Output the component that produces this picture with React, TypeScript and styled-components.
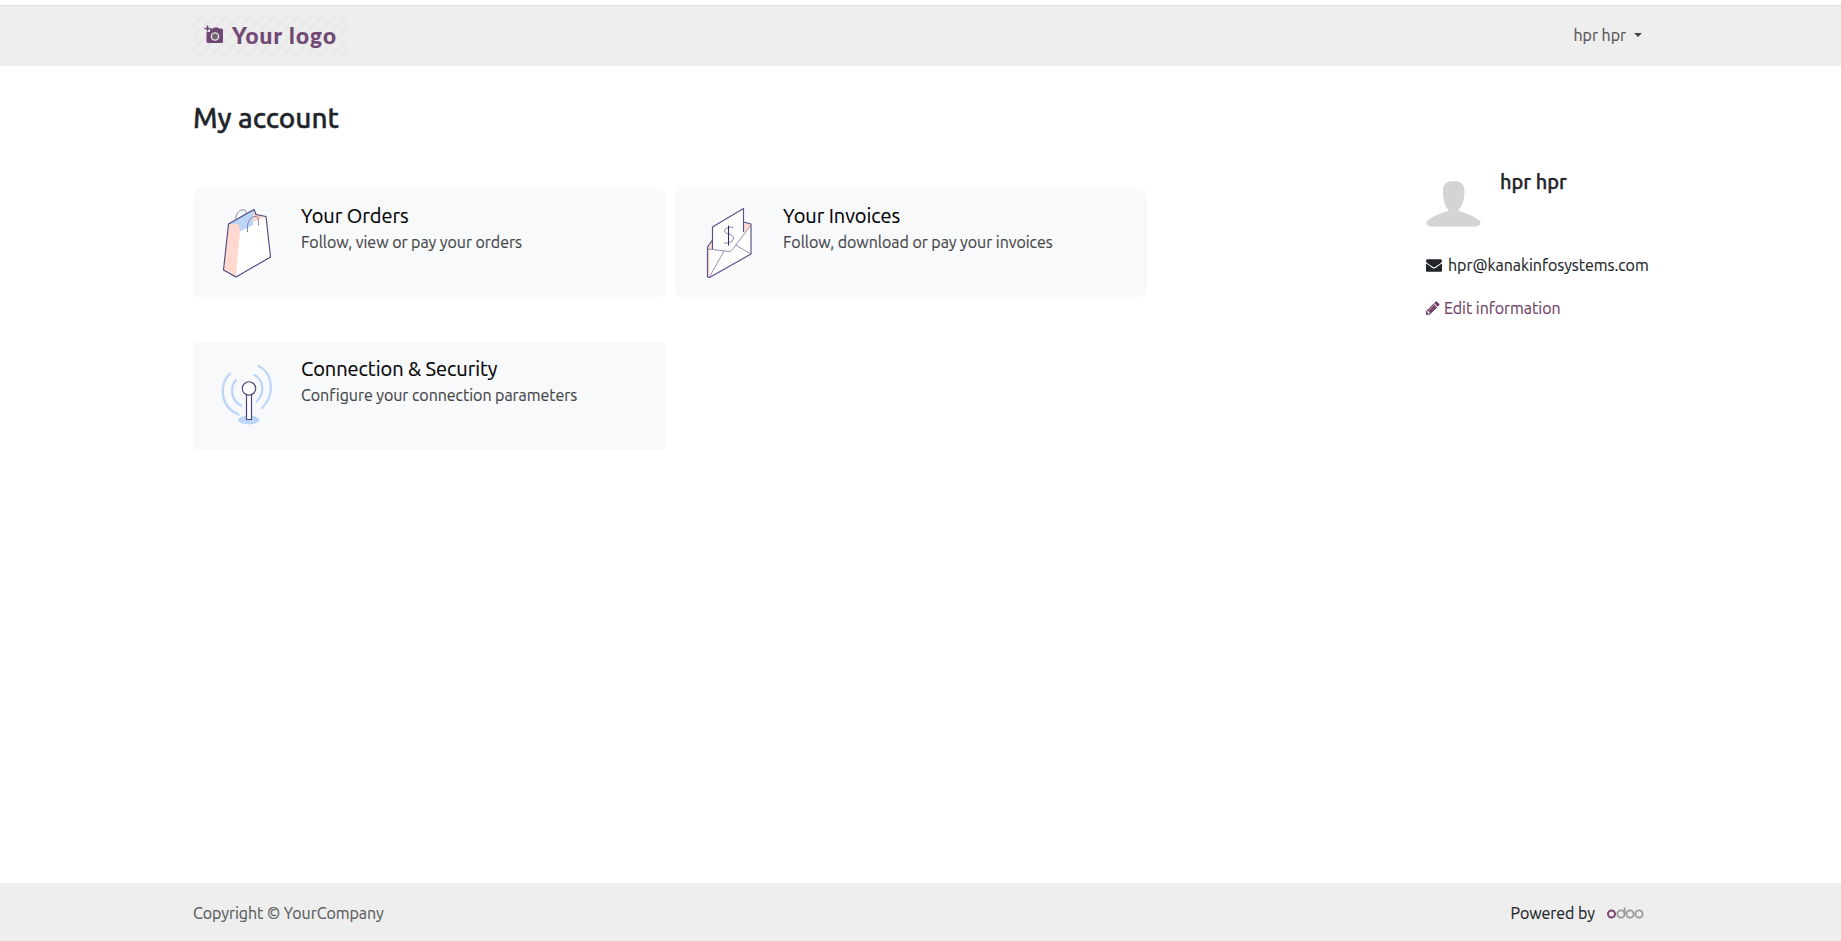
import React from 'react';
import styled, { createGlobalStyle } from 'styled-components';

const GlobalStyle = createGlobalStyle`
  * { box-sizing: border-box; }
  body {
    margin: 0;
    background: #fff;
    color: #212529;
    font-family: Ubuntu, 'Noto Sans', sans-serif;
    font-size: 16px;
    line-height: 24px;
    letter-spacing: -0.045px;
    -webkit-text-stroke: 0.15px;
  }
  a { color: inherit; text-decoration: none; }
  h1, h3, h4, p { margin: 0; }
  svg { display: block; flex: none; }
`;

const Page = styled.div`
  display: flex;
  flex-direction: column;
  height: 941px;
`;

const Header = styled.header`
  display: flex;
  justify-content: space-between;
  height: 60px;
  margin-top: 6px;
  padding: 9px 198px 0 193px;
  background: #eeeeee;
  box-shadow: 0 -1px 0 #dfdfdf;
`;

const Brand = styled.a`
  display: flex;
  align-items: flex-start;
  width: 156px;
  height: 42px;
  padding: 10px 0 0 11px;
  background: repeating-linear-gradient(135deg, #eeeeee 0 6.200px, #e9e9e9 6.200px 8.500px);
`;

const BrandName = styled.span`
  margin-left: 8px;
  color: #714873;
  font: 900 22.5px/22px Lato, sans-serif;
  letter-spacing: 1.15px;
  white-space: nowrap;
`;

const UserMenu = styled.a`
  display: flex;
  align-items: center;
  height: 24px;
  margin-top: 8px;
  color: #555;
`;

const Caret = styled.span`
  margin: 0 1px 0 8px;
  border: 4px solid transparent;
  border-top-color: #444;
  border-bottom: 0;
`;

const Main = styled.main`
  flex: 1;
  padding: 32px 192px 0 193px;
`;

const Title = styled.h1`
  font-size: 28px;
  line-height: 40px;
  font-weight: 500;
  -webkit-text-stroke: 0.4px;
`;

const Columns = styled.div`
  display: flex;
  justify-content: space-between;
`;

const Cards = styled.div`
  display: grid;
  grid-template-columns: 473px 472px;
  grid-auto-rows: 108px;
  gap: 45px 9px;
  padding-top: 51px;
`;

const Card = styled.a`
  display: flex;
  border-radius: 6px;
  background: #f8f9fb;
`;

const CardIcon = styled.svg<{ $shift?: number }>`
  width: 80px;
  height: 90px;
  margin: 6px ${p => 11 + (p.$shift ?? 0)}px 0 ${p => 17 - (p.$shift ?? 0)}px;
`;

const CardBody = styled.div`
  padding-top: 14px;
  white-space: nowrap;
`;

const CardTitle = styled.h3`
  color: #000;
  font-size: 20px;
  line-height: 26px;
  font-weight: 400;
`;

const CardText = styled.p`
  margin-top: 1px;
  color: #444648;
`;

const Profile = styled.aside`
  width: 223px;
  padding-top: 31px;
`;

const Person = styled.div`
  display: flex;
  height: 59px;
`;

const PersonName = styled.h4`
  margin-left: 18px;
  font-size: 20px;
  line-height: 26px;
  font-weight: 500;
  -webkit-text-stroke: 0.35px;
`;

const Line = styled.div<{ $top: number; $gap: number }>`
  display: flex;
  align-items: center;
  gap: ${p => p.$gap}px;
  margin-top: ${p => p.$top}px;
`;

const EditLink = styled(Line).attrs({ as: 'a' })`
  color: #714367;
`;

const Footer = styled.footer`
  display: flex;
  justify-content: space-between;
  height: 58px;
  padding: 18px 197px 0 193px;
  background: #eeeeee;
`;

const Copyright = styled.span`
  color: #5a5c5e;
`;

const Powered = styled.span`
  display: flex;
  gap: 12px;
`;

const Camera = () => (
  <svg width="20" height="20" viewBox="0 0 20 20">
    <path d="M6 3.500h3l1-1h4l1 1h2.500q1.500 0 1.500 1.500v11.500q0 1.500-1.500 1.500h-14Q2.500 18 2.500 16.500V7H6z" fill="#714873" />
    <circle cx="11" cy="11.500" r="4.300" fill="#e6e0e7" />
    <circle cx="11" cy="11.500" r="2.900" fill="#6b6670" />
    <path d="M3.500 .5v6M.5 3.500h6" stroke="#714873" strokeWidth="1.500" />
  </svg>
);

const Bag = () => (
  <CardIcon viewBox="0 0 80 90" fill="none">
    <path d="M18.500 29 44 14.500 46 19.500 56 21.500 60.500 62 26 82 13.500 75z" fill="#fff" />
    <path d="M18.500 29h10.500l1 7-4 46-12.500-7z" fill="#ffd9cf" />
    <path d="M18.500 29 44 14.500 43 30 30 36.500 28.500 29z" fill="#bcd6fa" />
    <path d="M43.500 17 46 19.500 55 21.500 43.500 27z" fill="#ffd2c8" />
    <path d="M18.500 29 44 14.500 46 19.500 56 21.500 60.500 62 26 82 13.500 75z" stroke="#49447f" strokeWidth="1.100" strokeLinejoin="round" />
    <path d="M25.500 24c1-7 5-10 9-9 1.500.5 1.500 2 1.500 3M37.500 37v-5c0-7 5-11.500 9-10.500 2 1 2 3 2 9" stroke="#7b789f" strokeWidth=".9" />
  </CardIcon>
);

const Envelope = () => (
  <CardIcon $shift={2} viewBox="0 0 80 90" fill="none">
    <path d="M17.500 51 22.500 44 54 27l7 2v30L19.500 82l-2-1z" fill="#ffd9cf" />
    <path d="m19.500 54 22-3 19-20v28L19.500 82z" fill="#fff" />
    <path d="M22.500 32 53.500 13.500V37L41 56.500h-9l-9.500-2z" fill="#fff" />
    <path d="M22.500 54V32L53.500 13.500V37M22.500 45l-5 7v30l2 .5L61 59V29l-7.500-2" stroke="#57528b" strokeWidth="1.150" strokeLinejoin="round" />
    <path d="m18 54 22 2.500c2-1 4-4 5.500-6L61 30M34 56 19.500 82M45.500 50 61 59" stroke="#8583aa" strokeWidth=".9" />
    <path d="M43.500 33c-1-1.500-8-1-9 2.500-.5 4 9 3 9 7.500-.5 5-7 5.500-9.500 5" stroke="#8583aa" strokeWidth="1" />
    <path d="M38.500 30.500v20" stroke="#302b70" />
  </CardIcon>
);

const Antenna = () => (
  <CardIcon viewBox="0 0 80 90" fill="none">
    <g transform="translate(0 1)">
      <ellipse cx="38.700" cy="71" rx="10.800" ry="4.400" fill="#bcd6fa" />
      <path d="M20 24.500C9.500 35 9 57 28.500 65.500M26 31c-6.500 7-5 21 5.500 25.500M48.500 17C63.500 24 65 46 52 59M44.500 26c9.500 5 10.500 19 2 26.500" stroke="#bcd6fa" strokeWidth="2.300" strokeLinecap="round" />
      <path d="M36.500 45.500h5v25h-5z" fill="#fff" stroke="#49447f" strokeWidth="1.200" strokeLinejoin="round" />
      <circle cx="39" cy="39.500" r="6.500" fill="#fff" />
      <path d="M41 33.500c4 1 6 9 0 12 7-1 7-11 0-12z" fill="#ffd2c8" stroke="#ffe3dc" />
      <circle cx="39" cy="39.500" r="6.700" stroke="#49447f" strokeWidth="1.100" />
    </g>
  </CardIcon>
);

const Avatar = () => (
  <svg width="56" height="59" viewBox="0 0 56 59">
    <path d="M17 22c0-7 3.500-10 10.500-10S38.500 15 38.500 22c0 8-2 15-6 19v1c7 1.500 17 6 21 9.500 2 2 1 6-4 6h-44c-5 0-6-4-4-6 4-3.500 14-8 21-9.500v-1C18.500 37 17 30 17 22z" fill="#d4d4d4" />
  </svg>
);

const MailIcon = () => (
  <svg width="16" height="16" viewBox="0 0 1792 1792" fill="#212529">
    <path d="M1792 710v794q0 66-47 113t-113 47H160q-66 0-113-47T0 1504V710q44 49 101 87 362 246 497 345 57 42 92.500 65.500t94.500 48 110 24.500h2q51 0 110-24.500t94.500-48T1194 1142q170-123 498-345 57-39 100-87zm0-294q0 79-49 151t-122 123q-376 261-468 325-10 7-42.500 31t-54 38.500-52 32.500-57.500 27-50 9h-2q-23 0-50-9t-57.500-27-52-32.500-54-38.500-42.500-31q-91-64-262-182.500T172 690q-62-42-117-115.500T0 438q0-78 41.500-130T160 256h1472q65 0 112.500 47t47.500 113z" />
  </svg>
);

const PencilIcon = () => (
  <svg width="14" height="16" viewBox="0 0 1568 1792" fill="#714367">
    <path d="m363 1536 91-91-235-235-91 91v107h128v128h107zM886 608q0-22-22-22-10 0-17 7l-542 542q-7 7-7 17 0 22 22 22 10 0 17-7l542-542q7-7 7-17zm-54-192 416 416-832 832H0v-416zm683 96q0 53-37 90l-166 166-416-416 166-165q36-38 90-38 53 0 91 38l235 234q37 39 37 91z" />
  </svg>
);

const Odoo = () => (
  <svg width="37" height="24" viewBox="0 0 37 24" fill="none" strokeWidth="1.800">
    <circle cx="4.500" cy="13" r="3.500" stroke="#7d4773" strokeWidth="2" />
    <circle cx="14" cy="13" r="3.600" stroke="#999" />
    <path d="M17.600 6.500V13" stroke="#999" />
    <circle cx="23" cy="13" r="3.600" stroke="#999" />
    <circle cx="32" cy="13" r="3.600" stroke="#999" />
  </svg>
);

export default function App() {
  return (
    <Page>
      <GlobalStyle />
      <Header>
        <Brand><Camera /><BrandName>Your logo</BrandName></Brand>
        <UserMenu>hpr hpr<Caret /></UserMenu>
      </Header>
      <Main>
        <Title>My account</Title>
        <Columns>
          <Cards>
            <Card>
              <Bag />
              <CardBody>
                <CardTitle>Your Orders</CardTitle>
                <CardText>Follow, view or pay your orders</CardText>
              </CardBody>
            </Card>
            <Card>
              <Envelope />
              <CardBody>
                <CardTitle>Your Invoices</CardTitle>
                <CardText>Follow, download or pay your invoices</CardText>
              </CardBody>
            </Card>
            <Card>
              <Antenna />
              <CardBody>
                <CardTitle>Connection &amp; Security</CardTitle>
                <CardText>Configure your connection parameters</CardText>
              </CardBody>
            </Card>
          </Cards>
          <Profile>
            <Person><Avatar /><PersonName>hpr hpr</PersonName></Person>
            <Line $top={25} $gap={6}><MailIcon />hpr@kanakinfosystems.com</Line>
            <EditLink $top={19} $gap={4}><PencilIcon />Edit information</EditLink>
          </Profile>
        </Columns>
      </Main>
      <Footer>
        <Copyright>Copyright © YourCompany</Copyright>
        <Powered>Powered by<Odoo /></Powered>
      </Footer>
    </Page>
  );
}
